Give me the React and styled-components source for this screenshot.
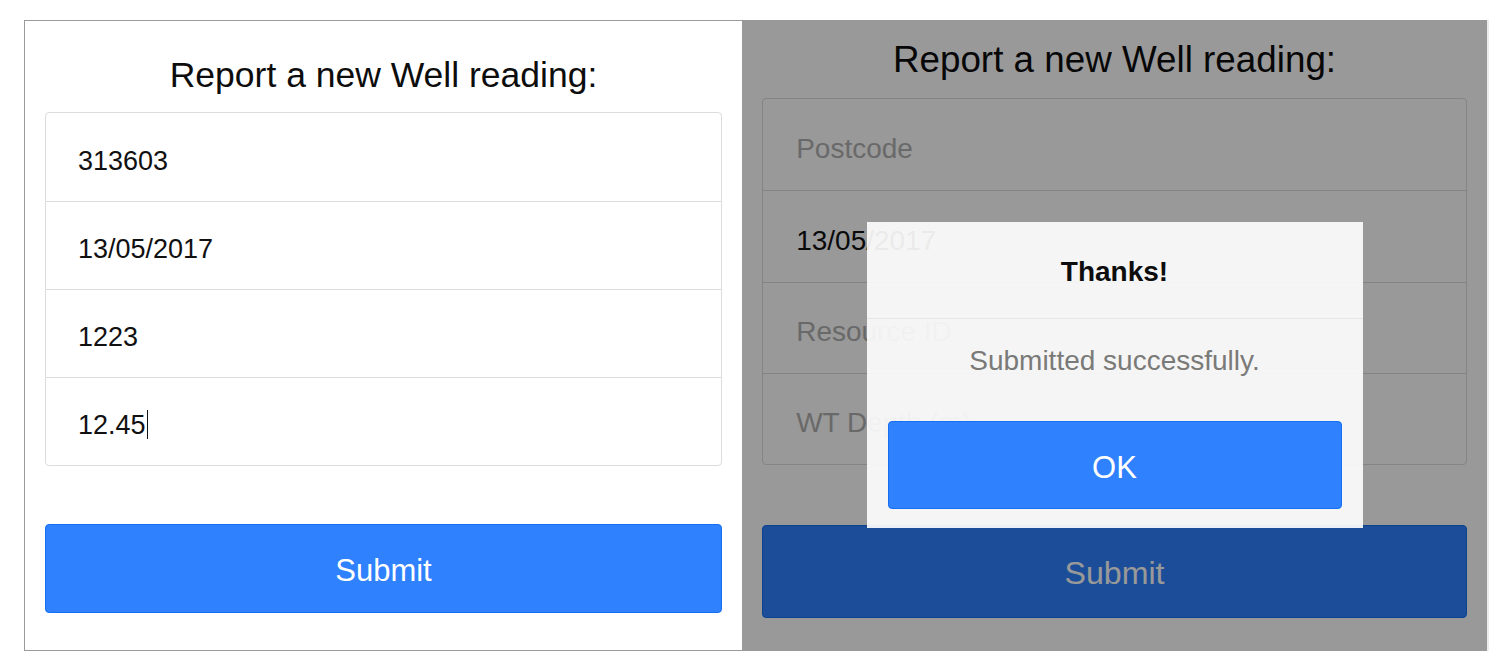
import React from "react";
import styled, { createGlobalStyle, css } from "styled-components";

const Global = createGlobalStyle`
  html, body {
    margin: 0;
    padding: 0;
    background: #ffffff;
  }
  body {
    font-family: "Liberation Sans", Helvetica, Arial, sans-serif;
    color: #111;
  }
  * { box-sizing: border-box; }
`;

const Stage = styled.div`
  display: flex;
  align-items: flex-start;
  padding: 20px 0 0 24px;
`;

const Panel = styled.section`
  position: relative;
  height: 631px;
  background: #ffffff;
  display: flex;
  flex-direction: column;
  ${(p) =>
    p.$variant === "left"
      ? css`
          --s: 1;
          width: 718px;
          border: 1px solid #9a9a9a;
          border-right: none;
          padding: 34px 20px 0 20px;
        `
      : css`
          --s: 1.037;
          width: 747px;
          border-right: 2px solid #ececec;
          padding: 19px 20px 0 20px;
        `}
`;

const Title = styled.h1`
  margin: 0 0 calc(17px * var(--s));
  font-size: calc(35.5px * var(--s));
  line-height: calc(40px * var(--s));
  font-weight: 400;
  text-align: center;
  color: #0d0d0d;
`;

const FieldGroup = styled.div`
  border: 1px solid #dcdcdc;
  border-radius: 4px;
  background: #fff;
  overflow: hidden;
`;

const Field = styled.div`
  height: calc(88px * var(--s));
  display: flex;
  align-items: center;
  padding: calc(8px * var(--s)) 0 0 calc(32px * var(--s));
  font-size: calc(27px * var(--s));
  color: ${(p) => (p.$placeholder ? "#b0b0b0" : "#111")};
  & + & {
    border-top: 1px solid #dcdcdc;
  }
`;

const Caret = styled.span`
  display: inline-block;
  width: 1.5px;
  height: calc(29px * var(--s));
  background: #111;
  margin-left: 1px;
  margin-top: calc(-3px * var(--s));
`;

const PrimaryButton = styled.button`
  display: block;
  width: 100%;
  height: ${(p) => p.$h || "calc(89px * var(--s))"};
  margin-top: ${(p) => p.$mt || "0"};
  padding: calc(4px * var(--s)) 0 0;
  background: #2f81fd;
  border: 1px solid #166ff2;
  border-radius: 4px;
  color: #ffffff;
  font-family: inherit;
  font-size: calc(31px * var(--s));
  line-height: 1;
  cursor: pointer;
`;

const Overlay = styled.div`
  position: absolute;
  inset: 0;
  background: rgba(0, 0, 0, 0.4);
  display: flex;
  justify-content: center;
  align-items: flex-start;
  padding-top: 202px;
`;

const Dialog = styled.div`
  width: 496px;
  background: rgba(252, 252, 252, 0.93);
  --s: 1;
`;

const DialogHeader = styled.div`
  padding: 34px 0 30px;
  text-align: center;
  font-size: 28px;
  line-height: 32px;
  font-weight: 700;
  color: #0d0d0d;
  border-bottom: 1px solid rgba(228, 228, 228, 0.9);
`;

const DialogBody = styled.div`
  padding: 26px 21px 19px;
  display: flex;
  flex-direction: column;
  align-items: stretch;
`;

const Message = styled.p`
  margin: 0 0 44px;
  text-align: center;
  font-size: 28px;
  line-height: 32px;
  color: #7a7a78;
`;

function Form({ fields }) {
  return (
    <>
      <Title>Report a new Well reading:</Title>
      <FieldGroup>
        {fields.map((f, i) => (
          <Field key={i} $placeholder={!f.value}>
            {f.value || f.placeholder}
            {f.caret && <Caret />}
          </Field>
        ))}
      </FieldGroup>
      <PrimaryButton $mt="calc(58px * var(--s))">Submit</PrimaryButton>
    </>
  );
}

const filled = [
  { value: "313603", placeholder: "Postcode" },
  { value: "13/05/2017", placeholder: "Date" },
  { value: "1223", placeholder: "Resource ID" },
  { value: "12.45", placeholder: "WT Depth (m)", caret: true },
];

const submitted = [
  { value: "", placeholder: "Postcode" },
  { value: "13/05/2017", placeholder: "Date" },
  { value: "", placeholder: "Resource ID" },
  { value: "", placeholder: "WT Depth (m)" },
];

export default function App() {
  return (
    <>
      <Global />
      <Stage>
        <Panel $variant="left">
          <Form fields={filled} />
        </Panel>
        <Panel $variant="right">
          <Form fields={submitted} />
          <Overlay>
            <Dialog>
              <DialogHeader>Thanks!</DialogHeader>
              <DialogBody>
                <Message>Submitted successfully.</Message>
                <PrimaryButton $h="88px">OK</PrimaryButton>
              </DialogBody>
            </Dialog>
          </Overlay>
        </Panel>
      </Stage>
    </>
  );
}
